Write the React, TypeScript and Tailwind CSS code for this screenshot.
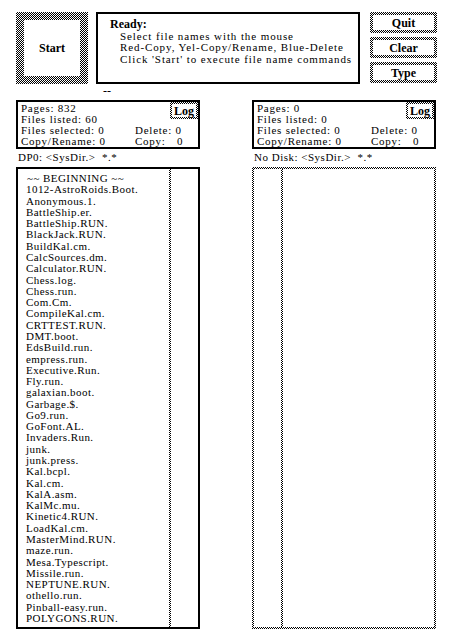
import React from 'react';

const dither = 'bg-[repeating-conic-gradient(#000_0%_25%,#fff_0%_50%)] bg-[length:2px_2px]';

const files = [
  '~~ BEGINNING ~~',
  '1012-AstroRoids.Boot.',
  'Anonymous.1.',
  'BattleShip.er.',
  'BattleShip.RUN.',
  'BlackJack.RUN.',
  'BuildKal.cm.',
  'CalcSources.dm.',
  'Calculator.RUN.',
  'Chess.log.',
  'Chess.run.',
  'Com.Cm.',
  'CompileKal.cm.',
  'CRTTEST.RUN.',
  'DMT.boot.',
  'EdsBuild.run.',
  'empress.run.',
  'Executive.Run.',
  'Fly.run.',
  'galaxian.boot.',
  'Garbage.$.',
  'Go9.run.',
  'GoFont.AL.',
  'Invaders.Run.',
  'junk.',
  'junk.press.',
  'Kal.bcpl.',
  'Kal.cm.',
  'KalA.asm.',
  'KalMc.mu.',
  'Kinetic4.RUN.',
  'LoadKal.cm.',
  'MasterMind.RUN.',
  'maze.run.',
  'Mesa.Typescript.',
  'Missile.run.',
  'NEPTUNE.RUN.',
  'othello.run.',
  'Pinball-easy.run.',
  'POLYGONS.RUN.',
];

function SmallButton({ label }: { label: string }) {
  return (
    <div className={`${dither} p-[3px] h-[21px] w-[67px]`}>
      <div className="bg-white h-full flex items-center justify-center font-bold text-[12px] leading-none">
        {label}
      </div>
    </div>
  );
}

interface StatsProps {
  pages: number;
  listed: number;
}

function Stats({ pages, listed }: StatsProps) {
  return (
    <div className="relative border-2 border-black h-[49px] pl-[3px] pt-[1px] text-[11px] leading-[11px] tracking-[0.75px]">
      <div>Pages: {pages}</div>
      <div>Files listed: {listed}</div>
      <div className="flex">
        <span className="w-[114px]">Files selected: 0</span>
        <span>Delete: 0</span>
      </div>
      <div className="flex">
        <span className="w-[114px]">Copy/Rename: 0</span>
        <span className="w-[42px]">Copy:</span>
        <span>0</span>
      </div>
      {/* Log button */}
      <div className={`absolute top-0 right-0 ${dither} p-[2px] w-[28px] h-[17px]`}>
        <div className="bg-white h-full flex items-center justify-center font-bold text-[12px] leading-none tracking-normal">
          Log
        </div>
      </div>
    </div>
  );
}

export default function App() {
  return (
    <div
      className="w-[454px] h-[640px] bg-white text-black overflow-hidden"
      style={{ fontFamily: '"Liberation Serif", "Times New Roman", serif' }}
    >
      {/* Top row */}
      <div className="flex pt-[12px] pl-[16px] h-[86px]">
        <div className={`${dither} p-[8px] w-[72px] h-[72px]`}>
          <div className="bg-white h-full flex items-center justify-center font-bold text-[12px]">Start</div>
        </div>
        <div className="ml-[8px] w-[264px] h-[72px] border-2 border-black pl-[12px] pt-[4px]">
          <div className="font-bold text-[12px] leading-[13px]">Ready:</div>
          <div className="pl-[10px] text-[11px] leading-[11.3px] tracking-[0.9px] whitespace-nowrap">
            <div>Select file names with the mouse</div>
            <div>Red-Copy, Yel-Copy/Rename, Blue-Delete</div>
            <div>Click 'Start' to execute file name commands</div>
          </div>
        </div>
        <div className="ml-[10px] flex flex-col gap-[4px]">
          <SmallButton label="Quit" />
          <SmallButton label="Clear" />
          <SmallButton label="Type" />
        </div>
      </div>

      <div className="h-[14px] pl-[103px] text-[12px] leading-[10px]">--</div>

      {/* Two directory panes */}
      <div className="flex pl-[16px] gap-[52px]">
        {/* Left pane */}
        <div className="w-[184px]">
          <Stats pages={832} listed={60} />
          <div className="h-[18px] pl-[2px] text-[11px] leading-[16px] tracking-[0.5px]">DP0: &lt;SysDir.&gt;&nbsp; *.*</div>
          <div className="border-2 border-black h-[462px] flex">
            <div className="flex-1 pl-[8px] pt-[4px] text-[11px] leading-[11.28px] tracking-[0.45px] whitespace-nowrap">
              {files.map((f, i) => (
                <div key={i} className={i === 0 ? 'pl-[1px]' : ''}>
                  {f}
                </div>
              ))}
            </div>
            <div className={`${dither} w-[2px]`} />
            <div className="w-[27px]" />
          </div>
        </div>

        {/* Right pane */}
        <div className="w-[184px]">
          <Stats pages={0} listed={0} />
          <div className="h-[18px] pl-[2px] text-[11px] leading-[16px] tracking-[0.5px]">No Disk: &lt;SysDir.&gt;&nbsp; *.*</div>
          <div className={`${dither} p-[2px] h-[462px]`}>
            <div className="bg-white h-full flex">
              <div className="w-[27px]" />
              <div className={`${dither} w-[2px]`} />
              <div className="flex-1" />
            </div>
          </div>
        </div>
      </div>
    </div>
  );
}
